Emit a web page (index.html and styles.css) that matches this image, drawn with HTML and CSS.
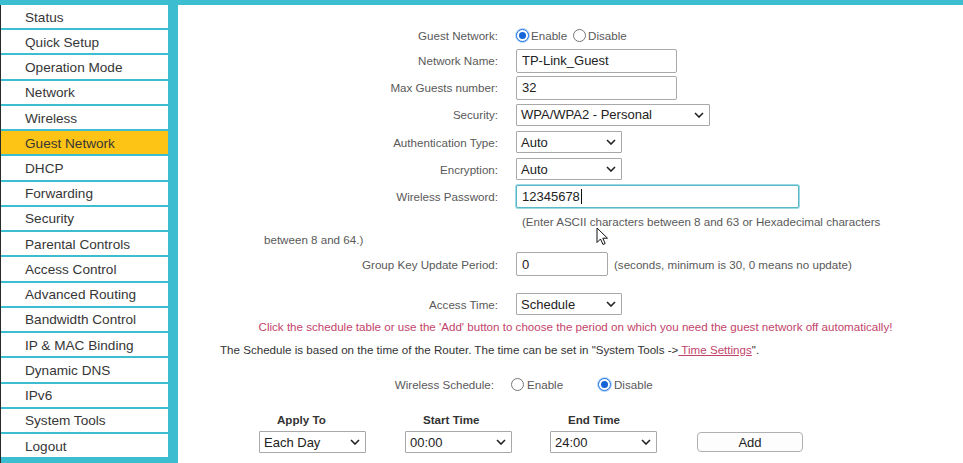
FILE: index.html
```html
<!DOCTYPE html>
<html>
<head>
<meta charset="utf-8">
<title>Guest Network</title>
<link rel="stylesheet" href="styles.css">
</head>
<body>
<div class="topbar"></div>
<div class="layout">
  <nav class="sidebar">
    <div class="menu-item">Status</div>
    <div class="menu-item">Quick Setup</div>
    <div class="menu-item">Operation Mode</div>
    <div class="menu-item">Network</div>
    <div class="menu-item">Wireless</div>
    <div class="menu-item active">Guest Network</div>
    <div class="menu-item">DHCP</div>
    <div class="menu-item">Forwarding</div>
    <div class="menu-item">Security</div>
    <div class="menu-item">Parental Controls</div>
    <div class="menu-item">Access Control</div>
    <div class="menu-item">Advanced Routing</div>
    <div class="menu-item">Bandwidth Control</div>
    <div class="menu-item">IP &amp; MAC Binding</div>
    <div class="menu-item">Dynamic DNS</div>
    <div class="menu-item">IPv6</div>
    <div class="menu-item">System Tools</div>
    <div class="menu-item">Logout</div>
  </nav>

  <main class="content">
    <div class="form-row first">
      <div class="lbl">Guest Network:</div>
      <div class="radios">
        <span class="radio checked"></span><span class="rtext">Enable</span>
        <span class="radio"></span><span class="rtext">Disable</span>
      </div>
    </div>
    <div class="form-row">
      <div class="lbl">Network Name:</div>
      <div class="input w-name">TP-Link_Guest</div>
    </div>
    <div class="form-row">
      <div class="lbl">Max Guests number:</div>
      <div class="input w-name">32</div>
    </div>
    <div class="form-row">
      <div class="lbl">Security:</div>
      <div class="select w-sec"><span>WPA/WPA2 - Personal</span><svg class="chev" width="10" height="6" viewBox="0 0 10 6"><path d="M1 1 L5 5 L9 1" fill="none" stroke="#222" stroke-width="1.6"/></svg></div>
    </div>
    <div class="form-row">
      <div class="lbl">Authentication Type:</div>
      <div class="select w-auto"><span>Auto</span><svg class="chev" width="10" height="6" viewBox="0 0 10 6"><path d="M1 1 L5 5 L9 1" fill="none" stroke="#222" stroke-width="1.6"/></svg></div>
    </div>
    <div class="form-row">
      <div class="lbl">Encryption:</div>
      <div class="select w-auto"><span>Auto</span><svg class="chev" width="10" height="6" viewBox="0 0 10 6"><path d="M1 1 L5 5 L9 1" fill="none" stroke="#222" stroke-width="1.6"/></svg></div>
    </div>
    <div class="form-row">
      <div class="lbl">Wireless Password:</div>
      <div class="input w-pwd focused">12345678<span class="caret"></span></div>
    </div>
    <p class="help">(Enter ASCII characters between 8 and 63 or Hexadecimal characters between 8 and 64.)</p>
    <div class="form-row key-row">
      <div class="lbl">Group Key Update Period:</div>
      <div class="field-inline">
        <div class="input w-key">0</div>
        <span class="note">(seconds, minimum is 30, 0 means no update)</span>
      </div>
    </div>
    <div class="form-row access-row">
      <div class="lbl">Access Time:</div>
      <div class="select w-auto"><span>Schedule</span><svg class="chev" width="10" height="6" viewBox="0 0 10 6"><path d="M1 1 L5 5 L9 1" fill="none" stroke="#222" stroke-width="1.6"/></svg></div>
    </div>
    <p class="notice">Click the schedule table or use the 'Add' button to choose the period on which you need the guest network off automatically!</p>
    <p class="sched-info">The Schedule is based on the time of the Router. The time can be set in "System Tools -&gt;<a class="link" href="#"> Time Settings</a>".</p>
    <div class="ws-row">
      <div class="lbl">Wireless Schedule:</div>
      <div class="ws-options">
        <div class="ws-opt"><span class="radio"></span><span class="rtext">Enable</span></div>
        <div class="ws-opt"><span class="radio checked"></span><span class="rtext">Disable</span></div>
      </div>
    </div>
    <div class="sched-table">
      <div class="th">Apply To</div>
      <div class="th">Start Time</div>
      <div class="th">End Time</div>
      <div class="th"></div>
      <div class="select w-tbl"><span>Each Day</span><svg class="chev" width="10" height="6" viewBox="0 0 10 6"><path d="M1 1 L5 5 L9 1" fill="none" stroke="#222" stroke-width="1.6"/></svg></div>
      <div class="select w-tbl"><span>00:00</span><svg class="chev" width="10" height="6" viewBox="0 0 10 6"><path d="M1 1 L5 5 L9 1" fill="none" stroke="#222" stroke-width="1.6"/></svg></div>
      <div class="select w-tbl"><span>24:00</span><svg class="chev" width="10" height="6" viewBox="0 0 10 6"><path d="M1 1 L5 5 L9 1" fill="none" stroke="#222" stroke-width="1.6"/></svg></div>
      <button class="btn">Add</button>
    </div>

    <svg class="pointer" width="13" height="19" viewBox="0 0 13 19"><path d="M1 1 L1 15.5 L4.5 12 L7 17.5 L9.2 16.5 L6.8 11.2 L11.5 11.2 Z" fill="#fff" stroke="#111" stroke-width="1" stroke-linejoin="round"/></svg>
  </main>
</div>
</body>
</html>
```

FILE: styles.css
```css
* { box-sizing: border-box; }
html, body { margin: 0; padding: 0; }
body {
  width: 963px;
  height: 463px;
  overflow: hidden;
  background: #fff;
  font-family: "Liberation Sans", Arial, sans-serif;
}
.topbar { height: 5px; background: #3dbdd0; }
.layout { display: flex; height: 458px; }

.sidebar {
  width: 178px;
  flex: none;
  display: flex;
  flex-direction: column;
  background: #3dbdd0;
  border-left: 1px solid #2a2a2a;
  border-right: 10px solid #3dbdd0;
}
.menu-item {
  height: 25.24px;
  flex: none;
  display: flex;
  align-items: center;
  padding-left: 24px;
  padding-top: 1px;
  background: #fff;
  border-bottom: 2px solid #3dbdd0;
  font-size: 13.6px;
  color: #363636;
}
.menu-item.active { background: #fdc315; }

.content {
  flex: 1;
  position: relative;
  padding-top: 19px;
  font-size: 11.6px;
  color: #595959;
}
.form-row {
  display: grid;
  grid-template-columns: 320px 1fr;
  column-gap: 18px;
  align-items: center;
  height: 27.2px;
}
.form-row.first { height: 23px; }
.lbl { text-align: right; white-space: nowrap; }

.radios { display: flex; align-items: center; }
.radio {
  width: 13px;
  height: 13px;
  flex: none;
  border-radius: 50%;
  border: 1px solid #767676;
  background: #fff;
  display: inline-flex;
  align-items: center;
  justify-content: center;
}
.radio.checked { border-color: #1a73e8; box-shadow: 0 0 0 1px #b9d6f7; }
.radio.checked::after {
  content: "";
  width: 7px;
  height: 7px;
  border-radius: 50%;
  background: #1565d8;
}
.radios .rtext { margin: 0 6px 0 2px; }

.input {
  height: 24px;
  justify-self: start;
  display: flex;
  align-items: center;
  padding-left: 5px;
  border: 1px solid #a8a8a8;
  border-radius: 2px;
  background: #fff;
  font-size: 13px;
  color: #222;
}
.w-name { width: 161px; }
.w-pwd { width: 283px; height: 23px; }
.w-key { width: 92px; }
.focused { border-color: #58b7c8; box-shadow: 0 0 0 1px #9fd9e3; }
.caret { display: inline-block; width: 1px; height: 15px; background: #111; margin-left: 1px; }

.select {
  height: 22px;
  justify-self: start;
  display: flex;
  align-items: center;
  justify-content: space-between;
  padding: 0 5px 0 4px;
  border: 1px solid #a8a8a8;
  border-radius: 1px;
  background: #fff;
  font-size: 13px;
  color: #222;
}
.w-sec { width: 194px; }
.w-auto { width: 106px; }
.w-tbl { width: 107px; }
.chev { flex: none; }

.help {
  margin: 3px 0 0 86px;
  width: 646px;
  text-indent: 258px;
  line-height: 18px;
}
.key-row { margin-top: 3px; height: 24px; }
.field-inline { display: flex; align-items: center; gap: 6px; }
.access-row { margin-top: 16px; height: 24px; }

.notice {
  margin: 2px 0 0;
  padding-left: 10px;
  line-height: 18px;
  text-align: center;
  color: #c2446b;
}
.sched-info {
  margin: 5px 0 0;
  padding-left: 42px;
  line-height: 18px;
  color: #333;
}
.link { color: #c2446b; text-decoration: underline; }

.ws-row {
  margin-top: 15px;
  height: 20px;
  display: grid;
  grid-template-columns: 316px 1fr;
  column-gap: 17px;
  align-items: center;
}
.ws-options { display: flex; align-items: center; }
.ws-opt { width: 87px; display: flex; align-items: center; gap: 3px; }

.sched-table {
  margin-top: 18px;
  padding-left: 81px;
  display: grid;
  grid-template-columns: 146px 145px 147px 120px;
  row-gap: 3px;
}
.th {
  height: 16px;
  line-height: 16px;
  padding-left: 18px;
  font-weight: bold;
  color: #333;
}
.btn {
  width: 106px;
  height: 20px;
  margin-top: 1px;
  padding: 0;
  border: 1px solid #b0b0b0;
  border-radius: 4px;
  background: #fdfdfd;
  font-family: "Liberation Sans", Arial, sans-serif;
  font-size: 13px;
  color: #222;
}
.pointer { position: absolute; left: 418px; top: 222px; }
```
